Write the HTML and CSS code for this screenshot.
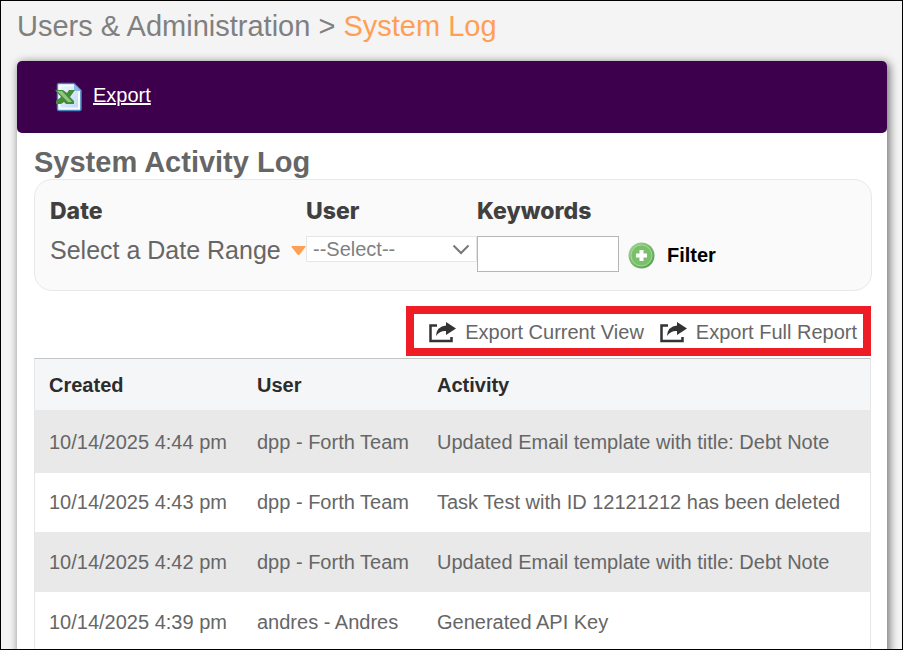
FILE: index.html
```html
<!DOCTYPE html>
<html lang="en">
<head>
    <meta charset="UTF-8">
    <meta name="viewport" content="width=device-width, initial-scale=1.0">
    <title>System Log</title>
    <link rel="stylesheet" href="styles.css">
</head>
<body>
    <h1 class="breadcrumb">Users &amp; Administration &gt; <span class="current">System Log</span></h1>
    <div class="card">
        <div class="toolbar">
            <svg class="excel-icon" width="28" height="30" viewBox="0 0 28 30" aria-hidden="true">
                <defs>
                    <linearGradient id="sheet" x1="0" y1="0" x2="1" y2="1">
                        <stop offset="0" stop-color="#f4f9ff"/>
                        <stop offset="1" stop-color="#b9d6f5"/>
                    </linearGradient>
                </defs>
                <path d="M4 1.500h15l7 7v18.500q0 1.500-1.500 1.500H4q-1.500 0-1.500-1.500V3q0-1.500 1.500-1.500z" fill="url(#sheet)" stroke="#4a83c0" stroke-width="1.500"/>
                <path d="M4.500 3.500h14l5.500 5.500v17.500H4.500z" fill="none" stroke="#f4faff" stroke-width="2"/>
                <path d="M19 2l7 7h-5q-2 0-2-2z" fill="#8db8e6"/>
                <path d="M0 8h8l4 3 2-3h6l-5 7 4 4v3h-8l-2-2-3 2H1v-3l5-4z" fill="#438c38"/>
                <path d="M2 9h5l10 11h-4z" fill="#93c583"/>
            </svg>
            <a class="toolbar-link" href="#">Export</a>
        </div>
        <div class="content">
            <h2>System Activity Log</h2>
            <form class="filters">
                <div class="filter-group date-group">
                    <span class="filter-label" id="date-label">Date</span>
                    <button type="button" class="date-range" aria-describedby="date-label">Select a Date Range
                        <svg class="caret" width="15" height="9" viewBox="0 0 15 9" aria-hidden="true">
                            <path d="M1 0h13q1 0 .5 1L8.500 8.500q-1 1-2 0L.5 1Q0 0 1 0z" fill="#ff9f55"/>
                        </svg>
                    </button>
                </div>
                <div class="filter-group user-group">
                    <label class="filter-label" for="user">User</label>
                    <div class="select-wrap">
                        <select id="user" name="user">
                            <option>--Select--</option>
                        </select>
                        <svg class="chevron" width="18" height="11" viewBox="0 0 18 11" aria-hidden="true">
                            <path d="M1.500 1.500L9 9l7.500-7.500" fill="none" stroke="#777" stroke-width="2"/>
                        </svg>
                    </div>
                </div>
                <div class="filter-group keyword-group">
                    <label class="filter-label" for="keywords">Keywords</label>
                    <input type="text" id="keywords" name="keywords">
                </div>
                <button type="button" class="filter-button">
                    <svg width="27" height="27" viewBox="0 0 27 27" aria-hidden="true">
                        <defs>
                            <linearGradient id="disc" x1="0" y1="0" x2="1" y2="1">
                                <stop offset="0" stop-color="#a5d69a"/>
                                <stop offset="1" stop-color="#4b9a40"/>
                            </linearGradient>
                        </defs>
                        <circle cx="13.500" cy="13.500" r="13" fill="url(#disc)"/>
                        <circle cx="13.500" cy="13.500" r="10.500" fill="#79c169" stroke="#a9d8a0" stroke-width="1"/>
                        <path d="M11.500 8h4v3.500H19v4h-3.500V19h-4v-3.500H8v-4h3.500z" fill="#fff"/>
                    </svg>
                    Filter
                </button>
            </form>
            <div class="export-links">
                <a href="#">
                    <svg width="27" height="21" viewBox="0 0 27 21" aria-hidden="true">
                        <path d="M8 3.500H1.500v15.500h21v-4" fill="none" stroke="#333" stroke-width="2.500"/>
                        <path d="M17 0l10 6.500-10 6.500v-4q-6-.5-10 5 .5-9.500 10-10.500z" fill="#333"/>
                    </svg>
                    Export Current View
                </a>
                <a href="#">
                    <svg width="27" height="21" viewBox="0 0 27 21" aria-hidden="true">
                        <path d="M8 3.500H1.500v15.500h21v-4" fill="none" stroke="#333" stroke-width="2.500"/>
                        <path d="M17 0l10 6.500-10 6.500v-4q-6-.5-10 5 .5-9.500 10-10.500z" fill="#333"/>
                    </svg>
                    Export Full Report
                </a>
            </div>
            <table class="log">
                <thead>
                    <tr>
                        <th class="col-created">Created</th>
                        <th class="col-user">User</th>
                        <th>Activity</th>
                    </tr>
                </thead>
                <tbody>
                    <tr>
                        <td>10/14/2025 4:44 pm</td>
                        <td>dpp - Forth Team</td>
                        <td>Updated Email template with title: Debt Note</td>
                    </tr>
                    <tr>
                        <td>10/14/2025 4:43 pm</td>
                        <td>dpp - Forth Team</td>
                        <td>Task Test with ID 12121212 has been deleted</td>
                    </tr>
                    <tr>
                        <td>10/14/2025 4:42 pm</td>
                        <td>dpp - Forth Team</td>
                        <td>Updated Email template with title: Debt Note</td>
                    </tr>
                    <tr>
                        <td>10/14/2025 4:39 pm</td>
                        <td>andres - Andres</td>
                        <td>Generated API Key</td>
                    </tr>
                </tbody>
            </table>
        </div>
    </div>
</body>
</html>
```
FILE: styles.css
```css
* {
    box-sizing: border-box;
}
body {
    display: flex;
    flex-direction: column;
    margin: 0;
    height: 100vh;
    overflow: hidden;
    padding: 0 15px 0 16px;
    border: 1px solid #000;
    background-color: #f4f4f4;
    color: #666;
    font-family: "Liberation Sans", Arial, sans-serif;
    font-size: 20px;
}
.breadcrumb {
    margin: 0;
    padding: 8px 0 18px;
    font-size: 29px;
    font-weight: normal;
    line-height: 34px;
    color: #808080;
}
.breadcrumb .current {
    color: #ff9f55;
}

/* Main card */
.card {
    flex: 1;
    background-color: #fff;
    border-radius: 5px 5px 0 0;
    box-shadow: 2px 2px 8px 1px rgba(0, 0, 0, 0.5);
}
.toolbar {
    display: flex;
    align-items: center;
    gap: 10px;
    height: 72px;
    padding: 0 38px;
    background-color: #3d004d;
    border-radius: 5px;
}
.toolbar-link {
    padding-bottom: 4px;
    color: #fff;
}
.content {
    padding: 12px 15px 0 17px;
}
.content h2 {
    margin: 0;
    font-size: 29px;
    line-height: 34px;
}

/* Filter bar */
.filters {
    display: flex;
    align-items: flex-start;
    height: 112px;
    padding: 18px 15px;
    background-color: #fafafa;
    border: 1px solid #e8e8e8;
    border-radius: 18px;
}
.filter-group {
    display: flex;
    flex-direction: column;
    align-items: flex-start;
    gap: 12px;
}
.date-group {
    width: 256px;
}
.user-group {
    width: 171px;
}
.keyword-group {
    width: 142px;
}
.filter-label {
    font-family: Inter, "Liberation Sans", sans-serif;
    font-size: 23px;
    font-weight: 800;
    line-height: 26px;
    color: #404040;
}
.date-range {
    display: flex;
    align-items: center;
    justify-content: space-between;
    width: 100%;
    padding: 0;
    background: none;
    border: none;
    font-family: inherit;
    font-size: 25px;
    line-height: 28px;
    color: #666;
    white-space: nowrap;
    cursor: pointer;
}
.select-wrap {
    position: relative;
    width: 100%;
}
.select-wrap select {
    display: block;
    width: 100%;
    height: 26px;
    padding: 0 6px;
    appearance: none;
    background-color: #fff;
    border: 1px solid #e6e6e6;
    border-radius: 0;
    font-family: inherit;
    font-size: 20px;
    line-height: 24px;
    color: #808080;
}
.chevron {
    position: absolute;
    top: 8px;
    right: 7px;
    pointer-events: none;
}
.keyword-group input {
    width: 100%;
    height: 36px;
    padding: 4px 8px;
    background-color: #fff;
    border: 1px solid #b5b5b5;
    font-size: 20px;
}
.filter-button {
    display: flex;
    align-items: center;
    gap: 12px;
    margin: 44px 0 0 9px;
    padding: 0;
    background: none;
    border: none;
    font-family: inherit;
    font-size: 20px;
    font-weight: bold;
    color: #000;
    cursor: pointer;
}

/* Export links above the table */
.export-links {
    display: flex;
    gap: 16px;
    width: fit-content;
    height: 50px;
    margin: 15px 1px 2px auto;
    padding: 3px 6px 0 15px;
    border: 8px solid #ee1c25;
}
.export-links a {
    display: flex;
    align-items: center;
    gap: 9px;
    color: #666;
    text-decoration: none;
    white-space: nowrap;
}

/* Log table */
.log {
    width: calc(100% - 1px);
    border-collapse: separate;
    border-spacing: 0;
    border: 1px solid #e6e6e6;
    border-top: 1px solid #c4c4c4;
}
.log th,
.log td {
    height: 60px;
    padding: 0 14px;
    text-align: left;
}
.log th {
    height: 51px;
    padding-top: 2px;
    background-color: #f5f6f8;
    color: #2c2c2c;
}
.log tbody tr:nth-child(odd) {
    background-color: #e9e9e9;
}
.log tbody tr:first-child td {
    height: 63px;
    padding-top: 2px;
}
.log tbody tr:nth-child(2) td {
    height: 59px;
}
.col-created {
    width: 208px;
}
.col-user {
    width: 180px;
}
```
